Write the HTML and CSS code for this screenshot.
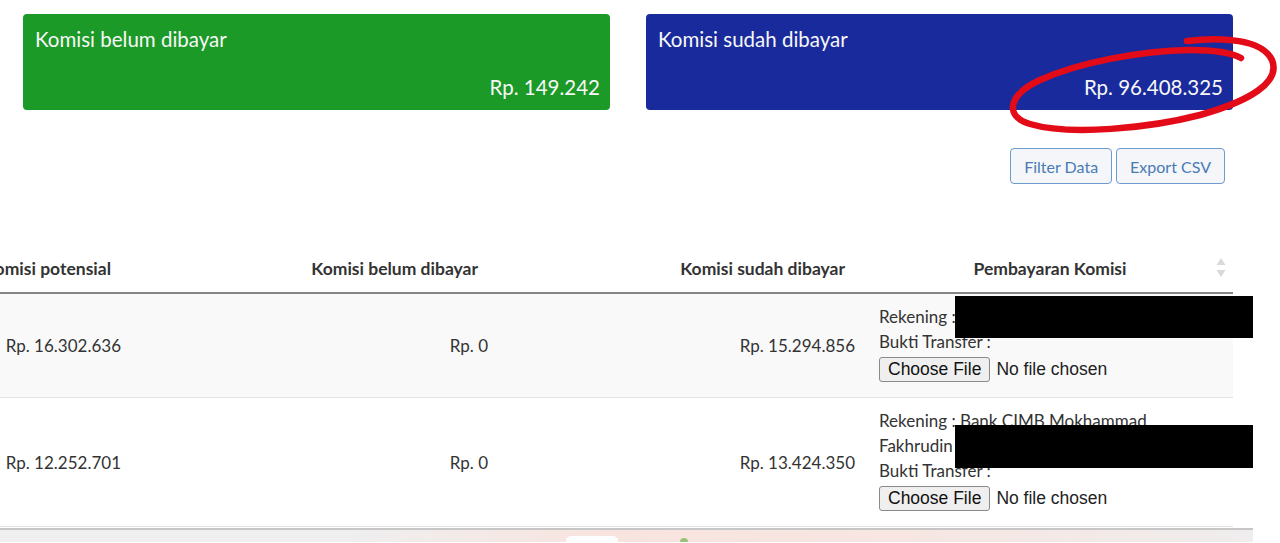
FILE: index.html
```html
<!DOCTYPE html>
<html lang="id">
<head>
    <meta charset="UTF-8">
    <meta name="viewport" content="width=device-width, initial-scale=1.0">
    <title>Komisi</title>
    <link rel="stylesheet" href="styles.css">
</head>
<body>
    <div class="page">
        <!-- Ringkasan komisi -->
        <div class="summary">
            <div class="card card-unpaid">
                <div class="card-title">Komisi belum dibayar</div>
                <div class="card-amount">Rp. 149.242</div>
            </div>
            <div class="card card-paid">
                <div class="card-title">Komisi sudah dibayar</div>
                <div class="card-amount">Rp. 96.408.325</div>
            </div>
        </div>

        <div class="toolbar">
            <button class="btn-outline">Filter Data</button>
            <button class="btn-outline">Export CSV</button>
        </div>

        <!-- Tabel komisi -->
        <div class="table-area">
            <table class="commission-table">
                <colgroup>
                    <col class="col-potential">
                    <col class="col-unpaid">
                    <col class="col-paid">
                    <col class="col-payment">
                </colgroup>
                <thead>
                    <tr>
                        <th class="num">Komisi potensial</th>
                        <th class="num">Komisi belum dibayar</th>
                        <th class="num">Komisi sudah dibayar</th>
                        <th class="payment-head">
                            Pembayaran Komisi
                            <svg class="sort-icon" width="10" height="19" viewBox="0 0 10 19">
                                <path d="M5 0 L9.5 7 L0.5 7 Z" fill="#d9d9d9"/>
                                <path d="M5 19 L9.5 12 L0.5 12 Z" fill="#d9d9d9"/>
                            </svg>
                        </th>
                    </tr>
                </thead>
                <tbody>
                    <tr class="odd">
                        <td class="num">Rp. 16.302.636</td>
                        <td class="num">Rp. 0</td>
                        <td class="num">Rp. 15.294.856</td>
                        <td>
                            <div class="payment">
                                <div>Rekening :</div>
                                <div>Bukti Transfer :</div>
                                <input type="file" class="file-input">
                                <span class="redact redact-one"></span>
                            </div>
                        </td>
                    </tr>
                    <tr>
                        <td class="num">Rp. 12.252.701</td>
                        <td class="num">Rp. 0</td>
                        <td class="num">Rp. 13.424.350</td>
                        <td>
                            <div class="payment">
                                <div>Rekening : Bank CIMB Mokhammad Fakhrudin</div>
                                <div>Bukti Transfer :</div>
                                <input type="file" class="file-input">
                                <span class="redact redact-two"></span>
                            </div>
                        </td>
                    </tr>
                </tbody>
            </table>
        </div>
    </div>

    <div class="bottom-bar">
        <span class="bar-tab"></span>
        <span class="bar-dot"></span>
    </div>

    <!-- Coretan merah -->
    <svg class="annotation" width="1280" height="543" viewBox="0 0 1280 543">
        <path d="M1187 41 C1222 37 1262 39 1272 60 C1281 82 1250 101 1200 115 C1150 128 1070 136 1030 124 C1004 116 1008 95 1040 80 C1080 62 1140 51 1190 50 C1214 50 1232 53 1241 58"
              fill="none" stroke="#e30b17" stroke-width="6.5" stroke-linecap="round"/>
    </svg>
</body>
</html>
```

FILE: styles.css
```css
html, body {
    margin: 0;
    overflow: hidden;
}

body {
    font-family: 'Lato', 'Liberation Sans', sans-serif;
    color: #333;
    background: #fff;
    height: 543px;
    position: relative;
}

.page {
    padding: 14px 47px 0 23px;
}

.summary {
    display: flex;
    gap: 36px;
}

.card {
    flex: 1;
    height: 96px;
    box-sizing: border-box;
    padding: 13px 10px 11px 12px;
    border-radius: 4px;
    color: #f7f7f7;
    display: flex;
    flex-direction: column;
    justify-content: space-between;
    font-size: 20.5px;
    line-height: 24px;
}

.card-unpaid {
    background: #1b9a27;
}

.card-paid {
    background: #192b9c;
}

.card-amount {
    text-align: right;
}

.toolbar {
    display: flex;
    justify-content: flex-end;
    gap: 4px;
    margin-top: 38px;
    padding-right: 8px;
}

.btn-outline {
    font-family: 'Lato', 'Liberation Sans', sans-serif;
    font-size: 16px;
    color: #4a7bb4;
    background: #f4f6f9;
    border: 1px solid #6c9bd0;
    border-radius: 4px;
    height: 36px;
    padding: 0 13px;
}

.table-area {
    margin: 68px 0 0 -63px;
}

.commission-table {
    width: 1273px;
    table-layout: fixed;
    border-collapse: collapse;
    font-size: 17px;
}

.col-potential { width: 173px; }
.col-unpaid { width: 367px; }
.col-paid { width: 367px; }
.col-payment { width: 366px; }

.commission-table th {
    font-weight: bold;
    font-size: 17.5px;
    line-height: 20px;
    padding: 7px 22px 13px 12px;
    border-bottom: 2px solid #858585;
    text-align: left;
    position: relative;
}

.commission-table th.num {
    text-align: right;
}

.commission-table th.payment-head {
    text-align: center;
    padding-left: 22px;
}

.sort-icon {
    position: absolute;
    right: 7px;
    top: 6px;
}

.commission-table td {
    padding: 10px 12px 15px 12px;
    border-bottom: 1px solid #e2e2e2;
    vertical-align: middle;
    line-height: 25px;
}

.commission-table td.num {
    text-align: right;
    padding-top: 0;
    padding-bottom: 0;
}

.commission-table tr.odd td {
    background: #f9f9f9;
}

.payment {
    position: relative;
    max-width: 300px;
}

.file-input {
    display: block;
    margin-top: 3px;
    font-family: 'Liberation Sans', Arial, sans-serif;
    font-size: 17.5px;
    color: #222;
    height: 25px;
    line-height: 23px;
}

.file-input::file-selector-button {
    font-family: 'Liberation Sans', Arial, sans-serif;
    font-size: 17.5px;
    background: #efefef;
    border: 1px solid #8a8a8a;
    border-radius: 3px;
    padding: 0 8px;
    height: 25px;
    margin-right: 6px;
    color: #111;
}

.redact {
    position: absolute;
    left: 76px;
    width: 298px;
    background: #000;
}

.redact-one {
    top: -8px;
    height: 42px;
}

.redact-two {
    top: 17px;
    height: 43px;
}

.bottom-bar {
    width: 1253px;
    height: 12px;
    margin-top: 1px;
    border-top: 2px solid #c6c6c6;
    background: linear-gradient(90deg, #efefef 0%, #efefef 28%, #f8e4df 48%, #f7e6e2 72%, #efeded 100%);
    display: flex;
    align-items: flex-end;
    overflow: hidden;
}

.bar-tab {
    width: 52px;
    height: 6px;
    margin-left: 566px;
    background: #fff;
    border-radius: 5px 5px 0 0;
}

.bar-dot {
    width: 8px;
    height: 4px;
    margin-left: 62px;
    background: #9cc07a;
    border-radius: 4px 4px 0 0;
}

.annotation {
    position: absolute;
    top: 0;
    left: 0;
    pointer-events: none;
}
```
